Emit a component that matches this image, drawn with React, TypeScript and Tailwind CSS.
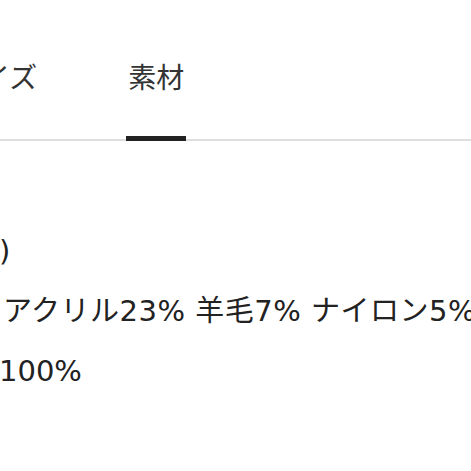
export default function App() {
  return (
    <main
      className="w-[471px] h-[471px] overflow-hidden bg-white text-[#222222]"
      style={{ fontFamily: '"DejaVu Sans", "Noto Sans CJK JP", sans-serif' }}
    >
      {/* Tabs */}
      <div className="flex items-end gap-[87px] h-[141px] border-b-2 border-[#dedede]">
        <div className="ml-[-48px] px-[2px] pb-[46px] text-[28px] leading-[28px] text-[#333333] whitespace-nowrap">
          サイズ
        </div>
        <div className="relative px-[2px] pb-[46px] text-[28px] leading-[28px] text-[#333333] whitespace-nowrap">
          素材
          <div className="absolute left-0 right-0 bottom-[-2px] h-[5px] bg-[#222222]" />
        </div>
      </div>

      {/* Material list */}
      <div className="mt-[80px] flex flex-col text-[29px] leading-[60px] whitespace-nowrap">
        <div className="ml-[-1px]">)</div>
        <div className="ml-[3px] tracking-[0.5px]">アクリル23% 羊毛7% ナイロン5%</div>
        <div className="ml-[-1px]">100%</div>
      </div>
    </main>
  );
}
